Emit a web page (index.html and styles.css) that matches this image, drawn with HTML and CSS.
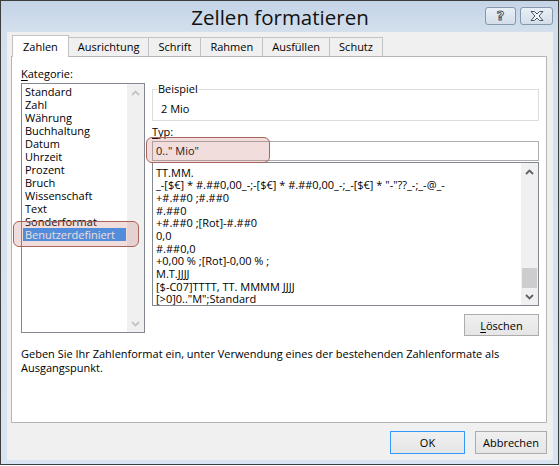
FILE: index.html
```html
<!DOCTYPE html>
<html lang="de">
<head>
<meta charset="utf-8">
<title>Zellen formatieren</title>
<link rel="stylesheet" href="styles.css">
</head>
<body>
<div class="window">
  <div class="titlebar">
    <div class="title">Zellen formatieren</div>
    <div class="caption-btns">
      <div class="cbtn help"><span class="qmark">?</span></div>
      <div class="cbtn close">
        <svg width="14" height="10" viewBox="0 0 14 10"><polygon points="1,0.5 4.5,0.5 7,3 9.5,0.5 13,0.5 9,5 13,9.5 9.5,9.5 7,7 4.5,9.5 1,9.5 5,5" fill="#f3f6fa" stroke="#4a5563" stroke-width="1"/></svg>
      </div>
    </div>
  </div>
  <div class="dlg">
    <div class="tabs">
      <div class="tab active">Zahlen</div>
      <div class="tab">Ausrichtung</div>
      <div class="tab">Schrift</div>
      <div class="tab">Rahmen</div>
      <div class="tab">Ausfüllen</div>
      <div class="tab">Schutz</div>
    </div>
    <div class="panel">
      <div class="top">
        <div class="leftcol">
          <div class="label catlabel"><u>K</u>ategorie:</div>
          <div class="catlist">
            <div class="items">
              <div class="item">Standard</div>
              <div class="item">Zahl</div>
              <div class="item">Währung</div>
              <div class="item">Buchhaltung</div>
              <div class="item">Datum</div>
              <div class="item">Uhrzeit</div>
              <div class="item">Prozent</div>
              <div class="item">Bruch</div>
              <div class="item">Wissenschaft</div>
              <div class="item">Text</div>
              <div class="item">Sonderformat</div>
              <div class="item sel">Benutzerdefiniert</div>
            </div>
            <div class="vscroll">
              <div class="arrow"><svg width="9" height="6" viewBox="0 0 9 6"><path d="M1 5 L4.5 1.5 L8 5" fill="none" stroke="#c4c4c4" stroke-width="1.8"/></svg></div>
              <div class="arrow"><svg width="9" height="6" viewBox="0 0 9 6"><path d="M1 1 L4.5 4.5 L8 1" fill="none" stroke="#c4c4c4" stroke-width="1.8"/></svg></div>
            </div>
          </div>
        </div>
        <div class="rightcol">
          <fieldset class="group">
            <legend>Beispiel</legend>
            <div class="sample">2 Mio</div>
          </fieldset>
          <div class="label typlabel"><u>T</u>yp:</div>
          <div class="input">0.." Mio"</div>
          <div class="fmtlist">
            <div class="fmtitems">
              <div class="fmt">TT.MM.</div>
              <div class="fmt">_-[$€] * #.##0,00_-;-[$€] * #.##0,00_-;_-[$€] * "-"??_-;_-@_-</div>
              <div class="fmt">+#.##0 ;#.##0</div>
              <div class="fmt">#.##0</div>
              <div class="fmt">+#.##0 ;[Rot]-#.##0</div>
              <div class="fmt">0,0</div>
              <div class="fmt">#.##0,0</div>
              <div class="fmt">+0,00 % ;[Rot]-0,00 % ;</div>
              <div class="fmt">M.T.JJJJ</div>
              <div class="fmt">[$-C07]TTTT, TT. MMMM JJJJ</div>
              <div class="fmt">[&gt;0]0.."M";Standard</div>
            </div>
            <div class="vscroll active">
              <div class="arrow"><svg width="9" height="6" viewBox="0 0 9 6"><path d="M1 5 L4.5 1.5 L8 5" fill="none" stroke="#606060" stroke-width="1.8"/></svg></div>
              <div class="track"><div class="thumb"></div></div>
              <div class="arrow"><svg width="9" height="6" viewBox="0 0 9 6"><path d="M1 1 L4.5 4.5 L8 1" fill="none" stroke="#606060" stroke-width="1.8"/></svg></div>
            </div>
          </div>
          <div class="btnrow"><div class="btn del"><u>L</u>öschen</div></div>
        </div>
      </div>
      <p class="desc">Geben Sie Ihr Zahlenformat ein, unter Verwendung eines der bestehenden Zahlenformate als<br>Ausgangspunkt.</p>
    </div>
    <div class="actions">
      <div class="btn ok">OK</div>
      <div class="btn cancel">Abbrechen</div>
    </div>
  </div>
  <div class="ann ann-cat"></div>
  <div class="ann ann-typ"></div>
</div>
</body>
</html>
```
FILE: styles.css
```css
* { box-sizing: border-box; }
html, body { margin: 0; padding: 0; background: #fff; }
body {
  font-family: "Open Sans", "Segoe UI", sans-serif;
  font-size: 11px;
  color: #000;
}
u { text-decoration-thickness: 1px; text-underline-offset: 2px; }

.window {
  position: relative;
  width: 559px;
  height: 465px;
  border: 1px solid #3d3d3d;
  background: linear-gradient(#c4d4e7 0px, #d3dfec 31px, #d8e4f1 100%);
  padding: 0 5px 4px 6px;
  display: flex;
  flex-direction: column;
}

.titlebar {
  height: 31px;
  display: grid;
  grid-template-columns: 1fr auto 1fr;
  align-items: start;
}
.title {
  grid-column: 2;
  font-size: 20.5px;
  line-height: 32px;
  color: #111;
  white-space: nowrap;
}
.caption-btns {
  grid-column: 3;
  justify-self: end;
  display: flex;
  gap: 4px;
  margin-top: 6px;
}
.cbtn {
  width: 31px;
  height: 18px;
  border: 1px solid #8797ab;
  border-radius: 3px;
  background: linear-gradient(#e9eff6, #d3deea);
  display: flex;
  align-items: center;
  justify-content: center;
}
.cbtn.close { width: 33px; }
.qmark {
  font-family: "DejaVu Sans", sans-serif;
  font-weight: bold;
  font-size: 13px;
  line-height: 14px;
  color: #f3f6fa;
  -webkit-text-stroke: 1px #4a5563;
}

.dlg {
  height: 428px;
  background: #f0f0f0;
  padding: 3px 6px 6px 4px;
  display: flex;
  flex-direction: column;
}

.tabs {
  display: flex;
  align-items: flex-end;
  height: 21px;
  padding-left: 1px;
}
.tab {
  height: 19px;
  line-height: 18px;
  padding: 0 9px;
  border: 1px solid #c3c3c3;
  border-bottom: none;
  background: #f0f0f0;
  margin-right: -1px;
  white-space: nowrap;
}
.tab.active {
  height: 22px;
  padding-top: 2px;
  padding-left: 10px;
  padding-right: 10px;
  margin-bottom: -1px;
  background: #fff;
  position: relative;
  z-index: 1;
}

.panel {
  height: 367px;
  border: 1px solid #b5b5b5;
  background: #fff;
  padding: 9px 7px 0 9px;
}
.top { display: flex; gap: 7px; }
.leftcol { width: 124px; }
.rightcol { width: 387px; }
.label { line-height: 15px; }
.catlabel { margin-bottom: 2px; }

.catlist {
  height: 250px;
  border: 1px solid #828790;
  display: flex;
}
.items { flex: 1; padding-top: 0.5px; }
.item {
  line-height: 13px;
  height: 13px;
  padding-left: 2px;
  margin: 0 1px;
  white-space: nowrap;
}
.item.sel { background: #3399ff; color: #fff; }

.vscroll {
  width: 17px;
  background: #f0f0f0;
  display: flex;
  flex-direction: column;
  justify-content: space-between;
}
.arrow {
  height: 17px;
  display: flex;
  align-items: center;
  justify-content: center;
}
.track { flex: 1; display: flex; flex-direction: column; }
.thumb {
  margin: auto 1px 0;
  height: 20px;
  background: #cdcdcd;
}

.group {
  margin: 15px 0 0;
  padding: 4px 0 4px 0;
  border: 1px solid #dcdcdc;
  min-width: 0;
}
.group legend {
  padding: 0 1px;
  margin-left: 4px;
  line-height: 16px;
}
.sample { line-height: 15px; padding-left: 8px; }
.typlabel { margin-top: 3px; }
.input {
  margin-top: 2px;
  height: 20px;
  border: 1px solid #abadb3;
  padding-left: 3px;
  line-height: 18px;
}
.fmtlist {
  margin-top: 1px;
  height: 144px;
  border: 1px solid #828790;
  display: flex;
}
.fmtitems {
  flex: 1;
  overflow: hidden;
  padding: 3.5px 0 0 3px;
}
.fmt {
  line-height: 12.7px;
  height: 12.7px;
  white-space: pre;
}

.btnrow { display: flex; justify-content: flex-end; margin-top: 8px; }
.btn {
  height: 22px;
  border: 1px solid #acacac;
  background: linear-gradient(#f0f0f0, #e5e5e5);
  display: flex;
  align-items: center;
  justify-content: center;
}
.btn.del { width: 75px; }

.desc {
  margin: 11px 0 0;
  line-height: 14px;
}

.actions {
  display: flex;
  justify-content: flex-end;
  gap: 10px;
  margin-top: 8px;
}
.btn.ok { width: 75px; height: 23px; border-color: #3399ff; }
.btn.cancel { width: 72px; height: 23px; }

.ann {
  position: absolute;
  border: 1.5px solid #a8665d;
  border-radius: 6px;
  background: rgba(190, 100, 90, 0.22);
}
.ann-cat { left: 12px; top: 220px; width: 126px; height: 26px; }
.ann-typ { left: 145px; top: 136px; width: 124px; height: 26px; }
```
